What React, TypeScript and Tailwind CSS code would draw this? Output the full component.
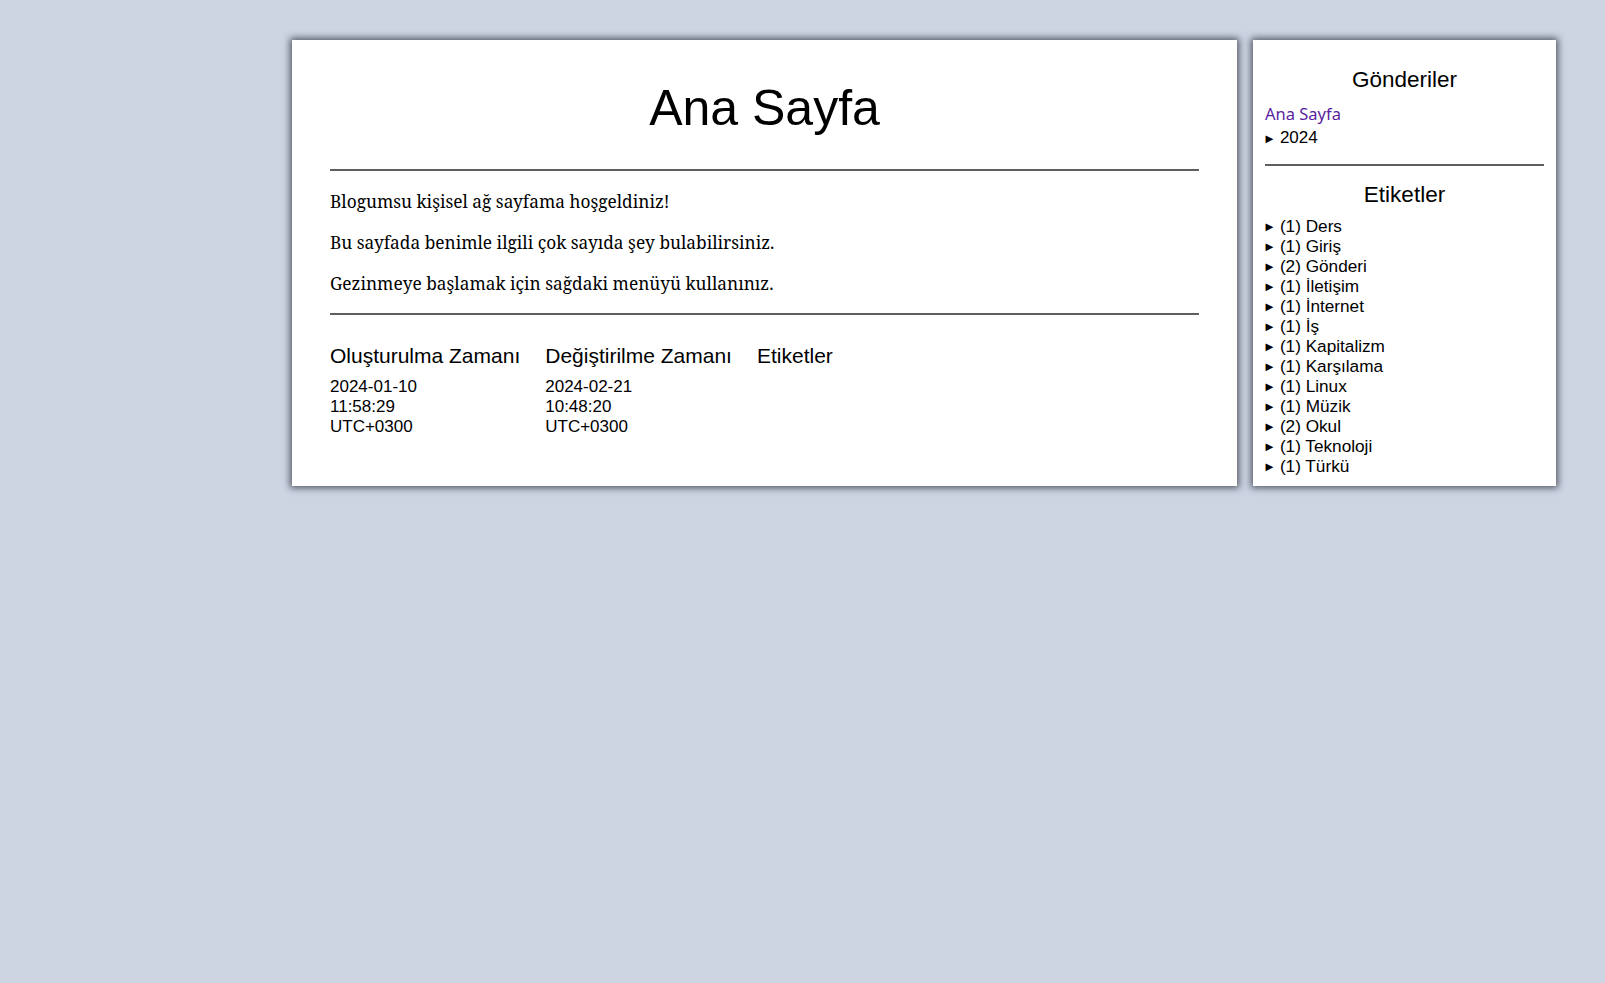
import React from "react";

const tags = [
  "(1) Ders",
  "(1) Giriş",
  "(2) Gönderi",
  "(1) İletişim",
  "(1) İnternet",
  "(1) İş",
  "(1) Kapitalizm",
  "(1) Karşılama",
  "(1) Linux",
  "(1) Müzik",
  "(2) Okul",
  "(1) Teknoloji",
  "(1) Türkü",
];

const sans = "font-['Liberation_Sans',Arial,sans-serif]";

const Arrow = () => <span className="text-[13px] -ml-[2px] mr-[4px] leading-none">►</span>;

const MetaCol = ({ title, lines }: { title: string; lines: string[] }) => (
  <div className="flex flex-col">
    <div className="text-[21px] leading-[24px]">{title}</div>
    <div className="mt-[9px] text-[17px] leading-[20px]">
      {lines.map((l) => (
        <div key={l}>{l}</div>
      ))}
    </div>
  </div>
);

const App = () => {
  return (
    <div className={`min-h-[983px] w-full bg-[#cdd5e3] pt-[40px] pl-[292px] text-black ${sans}`}>
      <div className="flex items-stretch gap-[16px]">
        <main className="w-[945px] bg-white shadow-[0_0_7px_2px_rgba(40,44,55,0.75)] px-[38px] pt-[39px] pb-[48px]">
          <h1 className="text-center text-[50px] leading-[58px] mb-[32px]">Ana Sayfa</h1>
          <div className="h-[2px] bg-[#5e5e5e]" />
          <div className="flex flex-col gap-[17px] pt-[19px] pb-[17px] font-['Noto_Serif','DejaVu_Serif_Condensed','DejaVu_Serif',serif] text-[17.3px] leading-[24px] [font-stretch:condensed]">
            <p>Blogumsu kişisel ağ sayfama hoşgeldiniz!</p>
            <p>Bu sayfada benimle ilgili çok sayıda şey bulabilirsiniz.</p>
            <p>Gezinmeye başlamak için sağdaki menüyü kullanınız.</p>
          </div>
          <div className="h-[2px] bg-[#5e5e5e]" />
          <div className="flex gap-[25px] mt-[29px]">
            <MetaCol title="Oluşturulma Zamanı" lines={["2024-01-10", "11:58:29", "UTC+0300"]} />
            <MetaCol title="Değiştirilme Zamanı" lines={["2024-02-21", "10:48:20", "UTC+0300"]} />
            <MetaCol title="Etiketler" lines={[]} />
          </div>
        </main>
        <aside className="w-[303px] bg-white shadow-[0_0_7px_2px_rgba(40,44,55,0.75)] px-[12px] pt-[28px] pb-[10px]">
          <h2 className="text-center text-[22.5px] leading-[24px] mb-[10px]">Gönderiler</h2>
          <a href="#" className="block text-[#5b1f9e] font-['Noto_Sans','Open_Sans',sans-serif] text-[16.5px] leading-[24px]">
            Ana Sayfa
          </a>
          <div className="flex items-center text-[17px] leading-[24px]">
            <Arrow />
            2024
          </div>
          <div className="h-[2px] bg-[#5e5e5e] mt-[14px]" />
          <h2 className="text-center text-[22.5px] leading-[26px] mt-[16px] mb-[8px]">Etiketler</h2>
          <ul>
            {tags.map((t) => (
              <li key={t} className="flex items-center text-[17.2px] leading-[20px]">
                <Arrow />
                {t}
              </li>
            ))}
          </ul>
        </aside>
      </div>
    </div>
  );
};

export default App;
